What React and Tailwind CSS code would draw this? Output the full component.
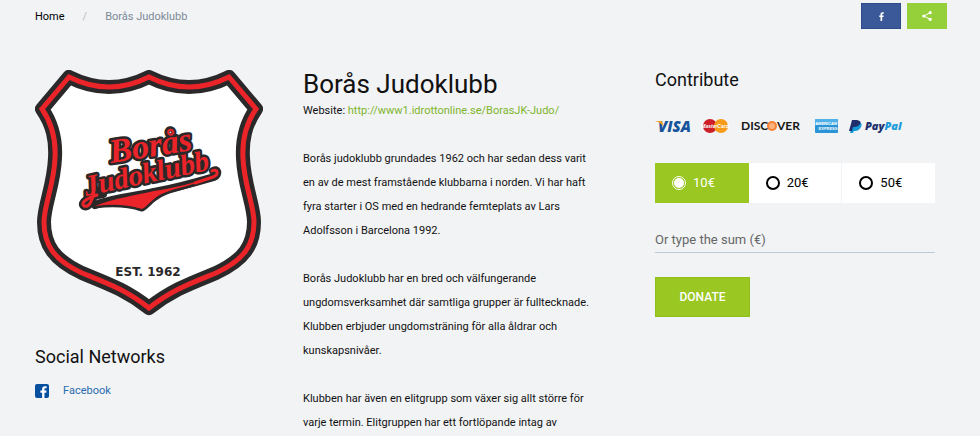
import React, { useState } from "react";

const amounts = [10, 20, 50];

const shieldPath =
  "M34 7Q74 27 114 7Q154 27 194 7L221 39C210 55 207 70 208 88C209 115 219 135 219 152C219 175 209 190 181 203C154 214 137 220 114 238C91 220 74 214 47 203C19 190 9 175 9 152C9 135 19 115 20 88C21 70 18 55 7 39Z";

const ClubShield = () => (
  <svg viewBox="0 0 228 246" className="block w-full" role="img" aria-label="Borås Judoklubb, est. 1962">
    <path d={shieldPath} fill="#fff" stroke="#2a2829" strokeWidth="14" strokeLinejoin="round" />
    <path d={shieldPath} fill="none" stroke="#ea2428" strokeWidth="5" />

    {/* Tail of the J and the pennant under the club name */}
    <g strokeLinecap="round" strokeLinejoin="round">
      <path d="M61 120C58 130 54 138 49 136C45 133 52 127 68 124" fill="none" stroke="#2a2829" strokeWidth="8" />
      <path
        d="M60 135C80 127 98 127 119 122C140 118 162 112 179 107C185 104 182 98 178 101"
        fill="none"
        stroke="#2a2829"
        strokeWidth="8"
      />
      <path
        d="M60 136C80 128 98 126 119 121C140 118 162 112 177 107C154 118 132 118 119 129C114 133 111 137 107 139C91 134 76 134 60 136Z"
        fill="#ea2428"
        stroke="#2a2829"
        strokeWidth="5"
        paintOrder="stroke"
      />
    </g>

    {/* Club name */}
    <g
      fontFamily="'Liberation Serif', serif"
      fontStyle="italic"
      fontWeight="700"
      fill="#ea2428"
      stroke="#2a2829"
      strokeWidth="5"
      strokeLinejoin="round"
      paintOrder="stroke"
    >
      <text x="76" y="93" fontSize="34" transform="rotate(-9 76 93)">Borås</text>
      <text x="51" y="126" fontSize="29" transform="rotate(-12 51 126)">Judoklubb</text>
    </g>

    <g fill="none" stroke="#ea2428" strokeWidth="3" strokeLinecap="round">
      <path d="M59 122C57 131 54 138 49 136C45 133 52 128 62 125" />
      <path d="M160 113L178 107C185 104 182 98 177 101" />
    </g>

    <text x="113" y="206" textAnchor="middle" fontFamily="'DejaVu Sans', sans-serif" fontWeight="700" fontSize="12" fill="#2a2829">
      EST. 1962
    </text>
  </svg>
);

const PaymentLogos = () => (
  <svg viewBox="0 0 250 20" className="block w-[250px] h-5" role="img" aria-label="Accepted cards">
    {/* Visa */}
    <text x="3" y="16" fontFamily="'Open Sans', sans-serif" fontWeight="800" fontStyle="italic" fontSize="15" fill="#17539a">VISA</text>
    <path d="M0 5h6q2 0 2 5Q5 6 0 5Z" fill="#f0a023" />

    {/* MasterCard */}
    <circle cx="55" cy="10" r="7" fill="#cc1f27" />
    <circle cx="66" cy="10" r="7" fill="#f79b1b" />
    <text x="60" y="12" textAnchor="middle" fontFamily="'Liberation Sans', sans-serif" fontWeight="700" fontStyle="italic" fontSize="5" fill="#fff">MasterCard</text>

    {/* Discover */}
    <g fontFamily="Lato, sans-serif" fontWeight="700" fontSize="12" fill="#161616">
      <text x="86" y="14">DISC</text>
      <text x="122" y="14">VER</text>
    </g>
    <circle cx="117" cy="10" r="5" fill="#f58235" />
    <circle cx="117" cy="10" r="3" fill="#fbb27c" />

    {/* American Express */}
    <rect x="160" y="3" width="23" height="14" rx="1" fill="#2b94d6" />
    <rect x="160" y="3" width="23" height="6" rx="1" fill="#4fb1e8" />
    <g fontFamily="'Liberation Sans', sans-serif" fontWeight="700" fontSize="4" fill="#fff" textAnchor="middle">
      <text x="171" y="9">AMERICAN</text>
      <text x="173" y="14">EXPRESS</text>
    </g>

    {/* PayPal */}
    <path d="M198 6h6q4 1 2 5t-6 4h-1l-1 2h-3Z" fill="#169bd7" />
    <path d="M197 4h5q5 1 3 4t-6 3h-1l-1 4h-3Z" fill="#1f2f6b" />
    <text x="210" y="14" fontFamily="'Open Sans', sans-serif" fontWeight="800" fontStyle="italic" fontSize="11" fill="#20306e">
      Pay<tspan fill="#1e9bd8">Pal</tspan>
    </text>
  </svg>
);

const FacebookGlyph = ({ className }) => (
  <svg viewBox="0 0 8 14" className={className} fill="currentColor" aria-hidden="true">
    <path d="M2.4 14V7.8H.4V5.3h2V3.6C2.4 1.4 3.6.3 5.6.3h2v2.3H6.3c-.9 0-1.2.4-1.2 1.2v1.5h2.4l-.3 2.5H5.1V14Z" />
  </svg>
);

const Header = () => (
  <header className="flex items-start justify-between pl-[35px] pr-[33px]">
    <nav aria-label="Breadcrumb" className="flex pt-[9px] text-[11px] leading-4">
      <a href="#home" className="text-black">Home</a>
      <span className="mx-[18px] text-[#b9bcc0]">/</span>
      <span className="text-[#7d8a97]">Borås Judoklubb</span>
    </nav>
    <div className="flex gap-[6px] pt-[3px]">
      <button aria-label="Share on Facebook" className="flex items-center justify-center w-10 h-[26px] bg-[#3b5998] border border-[#2d4a8c] text-white">
        <FacebookGlyph className="w-[5px] h-[9px]" />
      </button>
      <button aria-label="Share" className="flex items-center justify-center w-10 h-[26px] bg-[#95d03a] text-white">
        <svg viewBox="0 0 10 10" className="w-[10px] h-[10px]" aria-hidden="true">
          <path d="M8.2 1.7 1.8 5l6.4 3.3" fill="none" stroke="currentColor" strokeWidth="1" />
          <circle cx="8.2" cy="1.7" r="1.6" fill="currentColor" />
          <circle cx="1.8" cy="5" r="1.6" fill="currentColor" />
          <circle cx="8.2" cy="8.3" r="1.6" fill="currentColor" />
        </svg>
      </button>
    </div>
  </header>
);

const DonateForm = () => {
  const [amount, setAmount] = useState(10);

  return (
    <form onSubmit={(e) => e.preventDefault()}>
      <fieldset aria-label="Amount" className="flex h-10 mt-[27px]">
        {amounts.map((value) => (
          <label
            key={value}
            className={`flex flex-1 items-center gap-[7px] pl-[17px] text-[13px] border-r last:border-r-0 ${
              amount === value ? "bg-[#9ac722] text-white border-[#9ac722]" : "bg-white text-black border-[#f1f3f5]"
            }`}
          >
            <input
              type="radio"
              name="amount"
              value={value}
              checked={amount === value}
              onChange={() => setAmount(value)}
              className="appearance-none w-[14px] h-[14px] rounded-full border-2 border-black checked:border checked:border-white checked:bg-white checked:bg-clip-content checked:p-px"
            />
            {value}€
          </label>
        ))}
      </fieldset>

      <input
        type="text"
        aria-label="Or type the sum (€)"
        placeholder="Or type the sum (€)"
        className="block w-full h-[26px] mt-6 text-[13px] bg-transparent border-b border-[#bccbd9] placeholder:text-[#666] outline-none"
      />

      <button type="submit" className="block mt-6 w-[95px] h-10 bg-[#9ac722] border border-[#8fbd1c] text-white text-[12px] font-medium">
        DONATE
      </button>
    </form>
  );
};

const App = () => {
  return (
    <div className="min-h-screen bg-[#f1f3f5] font-['Roboto',sans-serif] text-[#111]">
      <Header />

      <div className="flex items-start pl-[35px] pr-[45px] pt-[41px]">
        <aside className="w-[228px] shrink-0">
          <ClubShield />
          <h2 className="mt-[29px] text-[18px] leading-6">Social Networks</h2>
          <a href="#facebook" className="flex items-center gap-[14px] mt-3 text-[11px] leading-5 text-[#2a6cad]">
            <span className="flex items-end justify-end w-[14px] h-[14px] pr-[2px] rounded-xs bg-[#07509f] text-white">
              <FacebookGlyph className="w-[7px] h-3" />
            </span>
            Facebook
          </a>
        </aside>

        <main className="flex-1 ml-10 mr-[60px] text-[11px] leading-6">
          <h1 className="text-[26px] leading-[29px]">Borås Judoklubb</h1>
          <p>
            Website:{" "}
            <a href="http://www1.idrottonline.se/BorasJK-Judo/" className="text-[#7fb52b]">
              http://www1.idrottonline.se/BorasJK-Judo/
            </a>
          </p>
          <p className="mt-6">
            Borås judoklubb grundades 1962 och har sedan dess varit en av de mest framstående klubbarna i norden. Vi har
            haft fyra starter i OS med en hedrande femteplats av Lars Adolfsson i Barcelona 1992.
          </p>
          <p className="mt-6">
            Borås Judoklubb har en bred och välfungerande ungdomsverksamhet där samtliga grupper är fulltecknade.
            Klubben erbjuder ungdomsträning för alla åldrar och kunskapsnivåer.
          </p>
          <p className="mt-6">
            Klubben har även en elitgrupp som växer sig allt större för varje termin. Elitgruppen har ett fortlöpande
            intag av
          </p>
        </main>

        <section className="w-[280px] shrink-0">
          <h2 className="mb-[26px] text-[18px] leading-5">Contribute</h2>
          <PaymentLogos />
          <DonateForm />
        </section>
      </div>
    </div>
  );
};

export default App;
